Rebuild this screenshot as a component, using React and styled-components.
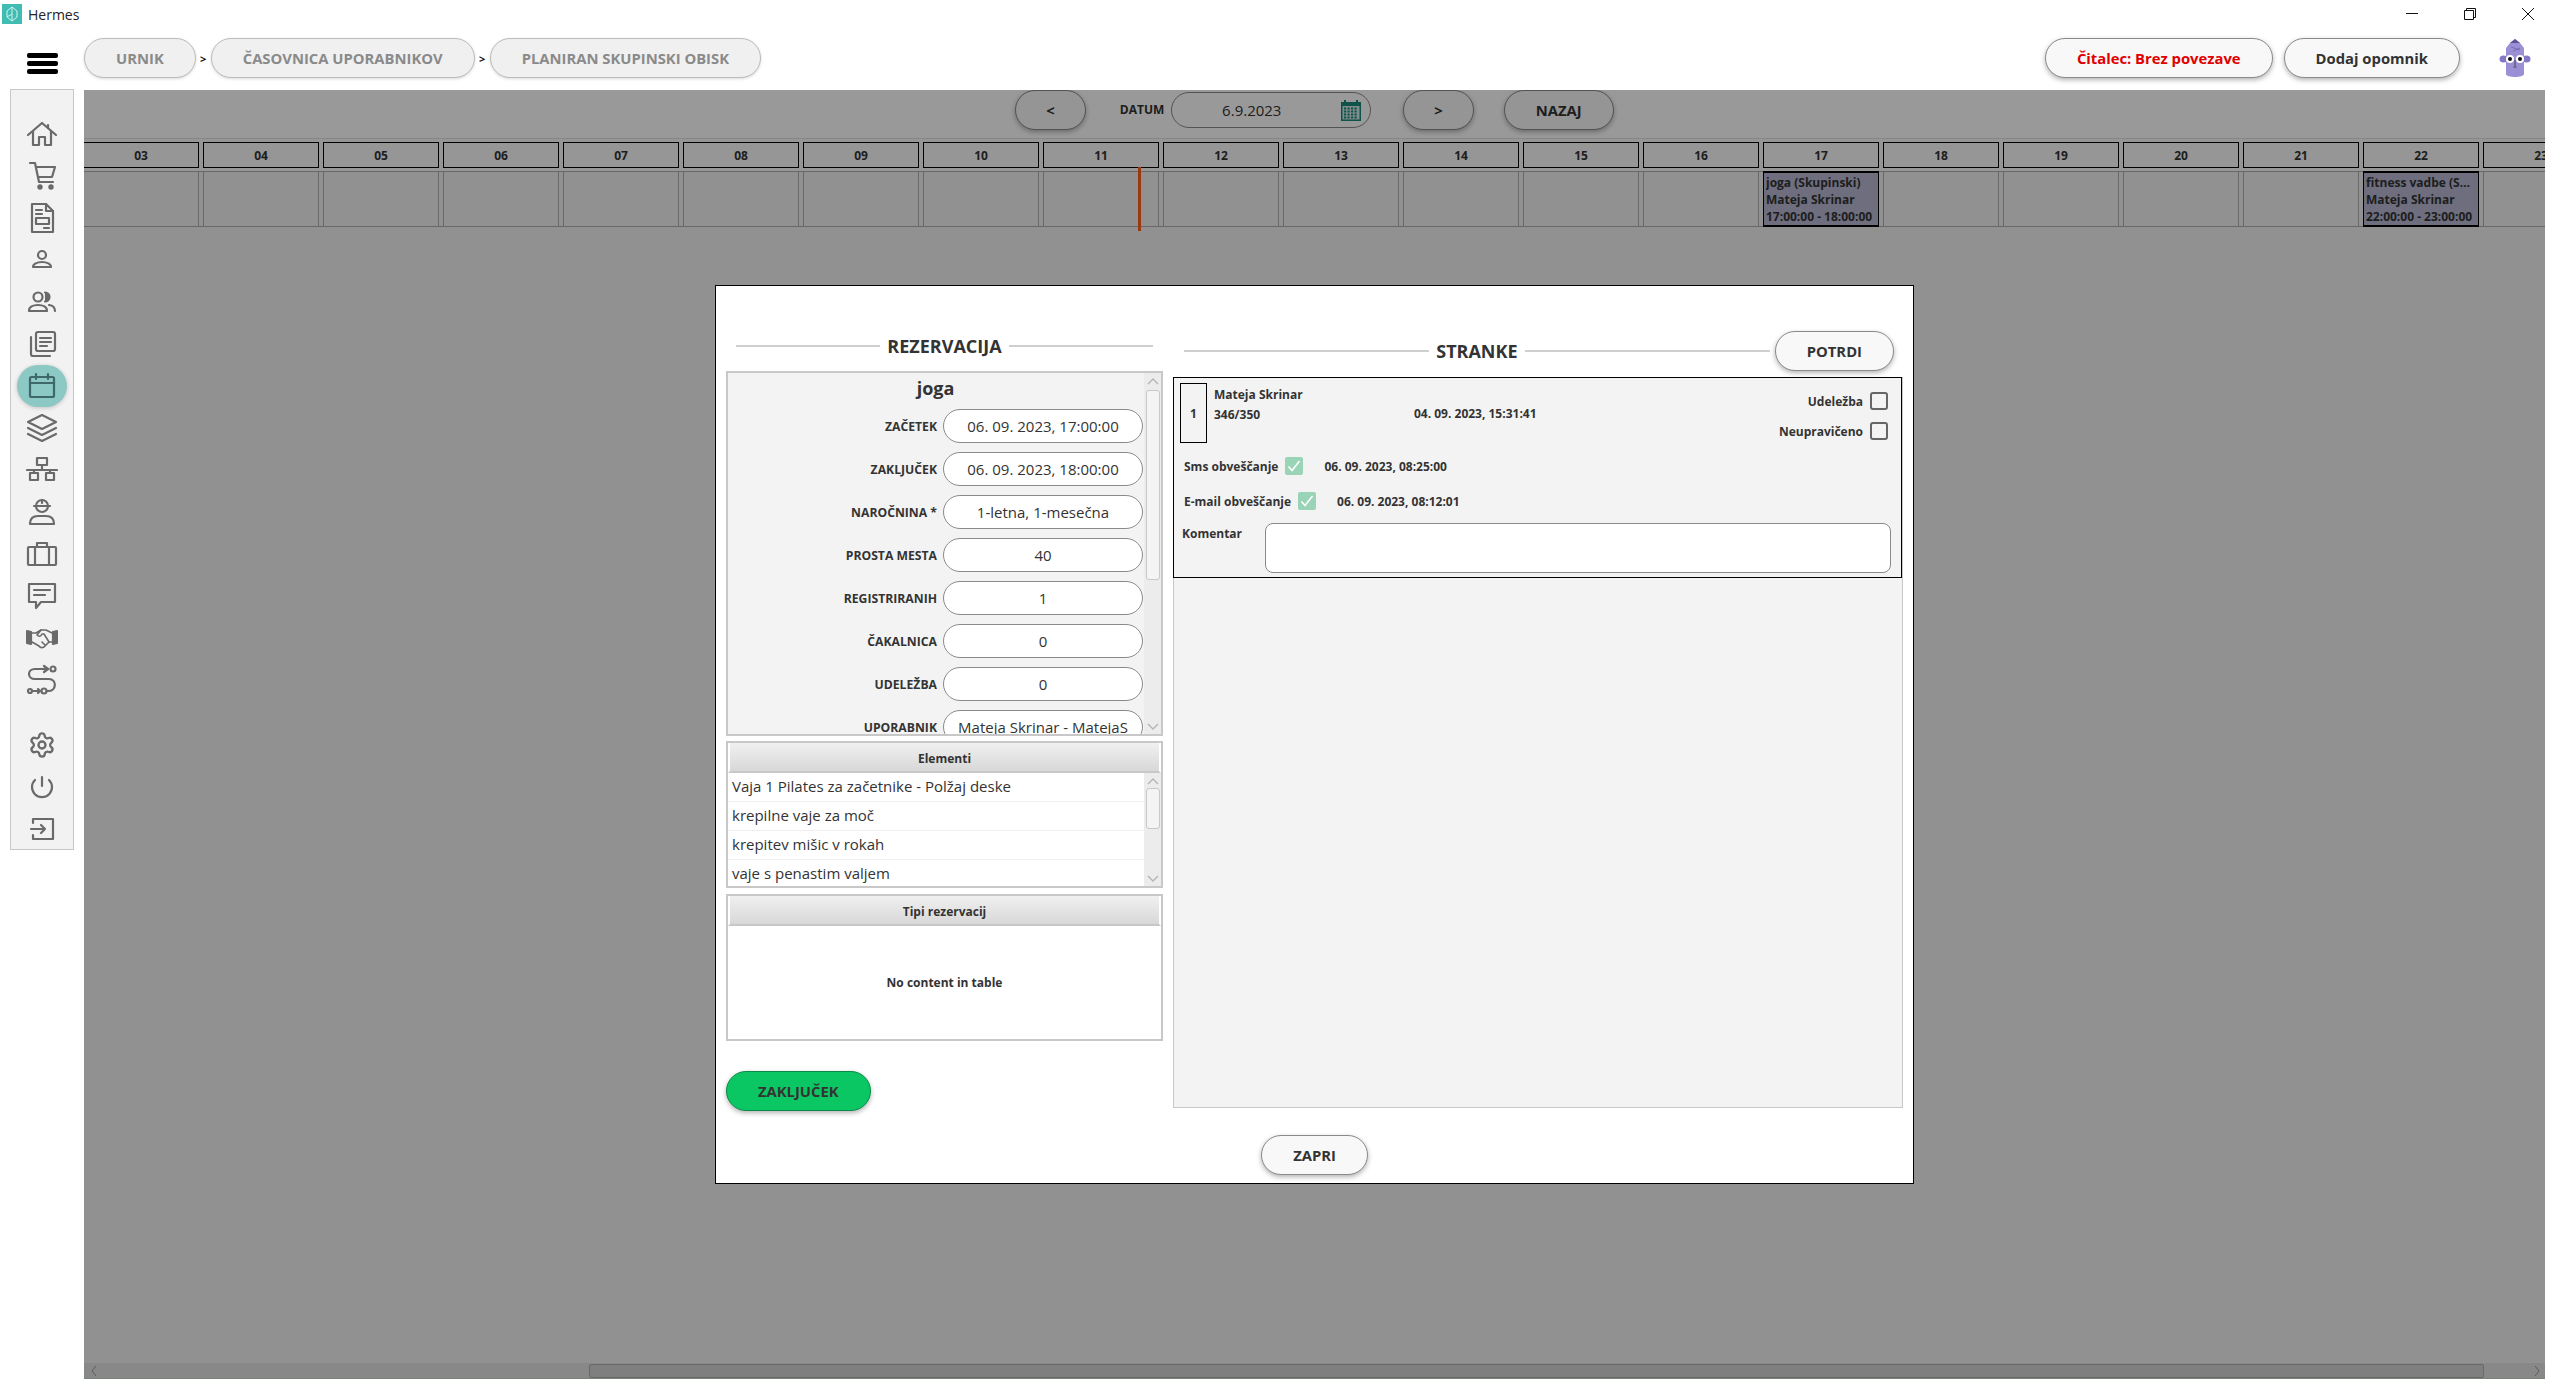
import React from "react";
import styled, { createGlobalStyle } from "styled-components";
import { Settings } from "lucide-react";

const days = ["03", "04", "05", "06", "07", "08", "09", "10", "11", "12", "13", "14", "15", "16", "17", "18", "19", "20", "21", "22", "23"];

const events = {
  17: ["joga (Skupinski)", "Mateja Skrinar", "17:00:00 - 18:00:00"],
  22: ["fitness vadbe (Skupinski)", "Mateja Skrinar", "22:00:00 - 23:00:00"],
};

const fields = [
  ["ZAČETEK", "06. 09. 2023, 17:00:00"],
  ["ZAKLJUČEK", "06. 09. 2023, 18:00:00"],
  ["NAROČNINA *", "1-letna, 1-mesečna"],
  ["PROSTA MESTA", "40"],
  ["REGISTRIRANIH", "1"],
  ["ČAKALNICA", "0"],
  ["UDELEŽBA", "0"],
  ["UPORABNIK", "Mateja Skrinar - MatejaS"],
];

const elements = [
  "Vaja 1 Pilates za začetnike - Polžaj deske",
  "krepilne vaje za moč",
  "krepitev mišic v rokah",
  "vaje s penastim valjem",
];

const Svg = ({ children }) => (
  <svg width="32" height="32" viewBox="0 0 32 32" fill="none" stroke="currentColor" strokeWidth="2.2" strokeLinecap="round" strokeLinejoin="round">
    {children}
  </svg>
);

const navTop = [
  <Svg>
    <path d="M2 17 16 5l14 12" />
    <path d="M7 13v14h6v-8h6v8h6V13" />
    <path d="M22 7v3" />
  </Svg>,
  <Svg>
    <path d="M4 3h5l4 19h14" />
    <path d="M10 7h19l-3 10H12" />
    <circle cx="14" cy="27" r="1.6" fill="currentColor" />
    <circle cx="25" cy="27" r="1.6" fill="currentColor" />
  </Svg>,
  <Svg>
    <path d="M6 2h14l7 7v21H6z" />
    <path d="M20 2v7h7" />
    <path d="M10 8h6M10 12h6M18 26h5" />
    <rect x="10" y="16" width="13" height="6" />
  </Svg>,
  <Svg>
    <circle cx="16" cy="11" r="4" />
    <path d="M7 23c0-3 4-5 9-5s9 2 9 5z" />
  </Svg>,
  <Svg>
    <circle cx="12" cy="11" r="4.5" />
    <path d="M3 25c0-4 4-6 9-6s9 2 9 6z" />
    <path d="M19 6.5a4.5 4.5 0 0 1 0 9" fill="currentColor" />
    <path d="M23 19c4 .6 6 3 6 6" />
  </Svg>,
  <Svg>
    <rect x="10" y="4" width="19" height="19" rx="2" />
    <path d="M14 10h11M14 14h11M14 18h7" />
    <path d="M5 9v17c0 1.500.8 2 2 2h17" />
  </Svg>,
];

const navMiddle = [
  <Svg>
    <path d="M16 3 30 10l-14 7L2 10z" />
    <path d="m2 16 14 7 14-7" />
    <path d="m2 22 14 7 14-7" />
  </Svg>,
  <Svg>
    <rect x="11" y="4" width="10" height="7" />
    <path d="M16 11v5M1 16h30M8 16v3M24 16v3" />
    <rect x="4" y="19" width="8" height="7" />
    <rect x="20" y="19" width="8" height="7" />
  </Svg>,
  <Svg>
    <circle cx="16" cy="10" r="6" />
    <path d="M8 10h16M16 4v3" />
    <path d="M4 28c0-5 3-8 8-8h8c5 0 8 3 8 8z" />
  </Svg>,
  <Svg>
    <rect x="2" y="9" width="28" height="18" rx="1" />
    <path d="M11 9V5h10v4M9 9v18M23 9v18" />
  </Svg>,
  <Svg>
    <path d="M3 4h26v18H15l-5 6v-6H3z" />
    <path d="M8 10h16M8 15h11" />
  </Svg>,
  <Svg>
    <path d="M1 9l4 1v12l-4-1z" fill="currentColor" />
    <path d="M31 9l-4 1v12l4-1z" fill="currentColor" />
    <g strokeWidth="1.6">
      <path d="M6 11h4l5-3h5l6 3" />
      <path d="M26 20h-3l-5 5c-2 1-4 .5-5-1l-7-4" />
      <path d="M15 8l-4 5c2 2 4 1.500 5-1h2l5 8" />
      <path d="M16 20l3 3" />
    </g>
  </Svg>,
  <Svg>
    <circle cx="27" cy="5" r="2.5" />
    <path d="M22 5H9c-8 0-8 10 0 10h14c8 0 8 12-1 12h-1" />
    <path d="m18 2 4 3-4 3" />
    <circle cx="4" cy="27" r="2" />
    <circle cx="18" cy="27" r="2.500" />
    <path d="M7 27h7m-2-2 2 2-2 2" />
  </Svg>,
];

const navBottom = [
  <Settings size={28} strokeWidth={2} />,
  <Svg>
    <path d="M16 6v9" />
    <path d="M9 9a10 10 0 1 0 14 0" />
  </Svg>,
  <Svg>
    <path d="M7 10V6h20v20H7v-4" />
    <path d="M5 16h14M15 12l4 4-4 4" />
  </Svg>,
];

const Chevron = ({ up }) => (
  <svg width="12" height="8" viewBox="0 0 12 8" fill="none" stroke="#b4b4b4" strokeWidth="1.400">
    <path d={up ? "M1 7l5-5 5 5" : "M1 1l5 5 5-5"} />
  </svg>
);

const Scroller = ({ thumbTop, thumbHeight }) => (
  <ScrollTrack>
    <ScrollArrow>
      <Chevron up />
    </ScrollArrow>
    <ScrollThumb $top={thumbTop} $height={thumbHeight} />
    <ScrollArrow $bottom>
      <Chevron />
    </ScrollArrow>
  </ScrollTrack>
);

const Tick = () => (
  <svg width="14" height="12" viewBox="0 0 14 12" fill="none" stroke="#fff" strokeWidth="1.600">
    <path d="M1.500 6.500 5 10.500 12.500 1" />
  </svg>
);

const Avatar = () => (
  <svg width="32" height="38" viewBox="0 0 32 38">
    <ellipse cx="4.500" cy="20" rx="4" ry="3.500" fill="#8578c4" />
    <ellipse cx="27.500" cy="20" rx="4" ry="3.500" fill="#8578c4" />
    <path d="M16 0l5 4 4 5v26c0 4-18 4-18 0V9l4-5z" fill="#9b8fd6" />
    <path d="M11 4h10l-5-4z" fill="#5e5396" />
    <path d="M12 8l9 3M14 12l7-3" stroke="#6e63a8" strokeWidth="0.800" fill="none" />
    <circle cx="11" cy="20" r="4" fill="#fff" />
    <circle cx="21" cy="20" r="4" fill="#fff" />
    <circle cx="11" cy="20" r="2" fill="#111" />
    <circle cx="21" cy="20" r="2" fill="#111" />
    <path d="M16 21v6M14.500 28h3" stroke="#333" strokeWidth="0.800" />
  </svg>
);

export default function App() {
  return (
    <Page>
      <GlobalStyle />

      <TitleBar>
        <Logo>
          <svg width="12" height="16" viewBox="0 0 12 16" fill="none" stroke="#d6f3ef" strokeWidth="1">
            <path d="M1 5l5-4 5 4v6l-5 4-5-4zM6 1v14M1 11l5-3" />
          </svg>
        </Logo>
        <AppName>Hermes</AppName>
        <WindowControls>
          <svg width="12" height="12" viewBox="0 0 12 12" stroke="#111" fill="none">
            <path d="M0 5.500h12" />
          </svg>
          <svg width="12" height="12" viewBox="0 0 12 12" stroke="#111" fill="none">
            <path d="M.5 2.500h9v9h-9zM2.500 2.500v-2h9v9h-2" />
          </svg>
          <svg width="12" height="12" viewBox="0 0 12 12" stroke="#111" fill="none">
            <path d="M0 0l12 12M12 0 0 12" />
          </svg>
        </WindowControls>
      </TitleBar>

      <TopBar>
        <Hamburger>
          <span />
          <span />
          <span />
        </Hamburger>
        <Crumbs>
          <Crumb>URNIK</Crumb>
          <CrumbSep>&gt;</CrumbSep>
          <Crumb>ČASOVNICA UPORABNIKOV</Crumb>
          <CrumbSep>&gt;</CrumbSep>
          <Crumb>PLANIRAN SKUPINSKI OBISK</Crumb>
        </Crumbs>
        <TopActions>
          <Pill $red>Čitalec: Brez povezave</Pill>
          <Pill>Dodaj opomnik</Pill>
          <AvatarBox>
            <Avatar />
          </AvatarBox>
        </TopActions>
      </TopBar>

      <Body>
        <Sidebar>
          {navTop.map((icon, i) => (
            <NavItem key={i}>{icon}</NavItem>
          ))}
          <NavItem $active>
            <Svg>
              <rect x="4" y="7" width="24" height="20" rx="1.500" />
              <path d="M4 13h24M10 4v5M22 4v5" />
            </Svg>
          </NavItem>
          {navMiddle.map((icon, i) => (
            <NavItem key={i}>{icon}</NavItem>
          ))}
          <NavSpacer />
          {navBottom.map((icon, i) => (
            <NavItem key={i}>{icon}</NavItem>
          ))}
        </Sidebar>

        <Content>
          <DateBar>
            <Pill $arrow>&lt;</Pill>
            <DateLabel>DATUM</DateLabel>
            <DateField>
              <DateValue>6.9.2023</DateValue>
              <svg width="20" height="21" viewBox="0 0 20 21">
                <path d="M0 2h3V0h2v2h10V0h2v2h3v19H0z" fill="#19897b" />
                <rect x="1.500" y="6" width="17" height="13.500" fill="#d6ece8" />
                {[8, 11, 14, 17].map((y) =>
                  [3, 6.5, 10, 13.5].map((x) => <rect key={x + "-" + y} x={x} y={y - 0.5} width="2.200" height="2" fill="#19897b" />)
                )}
              </svg>
            </DateField>
            <Pill $arrow $next>&gt;</Pill>
            <Pill $back>NAZAJ</Pill>
          </DateBar>

          <Timeline>
            <TimelineHead>
              {days.map((d) => (
                <DayCell key={d}>{d}</DayCell>
              ))}
            </TimelineHead>
            <TimelineRow>
              {days.map((d) => {
                const ev = events[Number(d)];
                return (
                  <SlotCell key={d} $event={!!ev}>
                    {ev && ev.map((line) => <EventLine key={line}>{line}</EventLine>)}
                  </SlotCell>
                );
              })}
            </TimelineRow>
            <NowLine />
          </Timeline>

          <HorizontalBar>
            <svg width="6" height="12" viewBox="0 0 6 12" fill="none" stroke="#9a9a9a">
              <path d="M5 1 1 6l4 5" />
            </svg>
            <HorizontalThumb />
            <svg width="6" height="12" viewBox="0 0 6 12" fill="none" stroke="#9a9a9a">
              <path d="M1 1l4 5-4 5" />
            </svg>
          </HorizontalBar>

          <Overlay>
            <Modal>
              <Columns>
                <LeftColumn>
                  <SectionTitle>
                    <TitleLine />
                    <TitleText>REZERVACIJA</TitleText>
                    <TitleLine />
                  </SectionTitle>

                  <FormPanel>
                    <FormBody>
                      <FormHeading>joga</FormHeading>
                      {fields.map(([label, value]) => (
                        <FormRow key={label}>
                          <FormLabel>{label}</FormLabel>
                          <FormInput readOnly value={value} />
                        </FormRow>
                      ))}
                    </FormBody>
                    <Scroller thumbTop={2} thumbHeight={190} />
                  </FormPanel>

                  <TableBox>
                    <TableHead>Elementi</TableHead>
                    <ListWrap>
                      <List>
                        {elements.map((el) => (
                          <ListRow key={el}>{el}</ListRow>
                        ))}
                      </List>
                      <Scroller thumbTop={0} thumbHeight={41} />
                    </ListWrap>
                  </TableBox>

                  <TableBox $gap>
                    <TableHead>Tipi rezervacij</TableHead>
                    <EmptyTable>No content in table</EmptyTable>
                  </TableBox>

                  <FinishRow>
                    <Pill $green>ZAKLJUČEK</Pill>
                  </FinishRow>
                </LeftColumn>

                <RightColumn>
                  <ClientsHeader>
                    <SectionTitle $wide>
                      <TitleLine />
                      <TitleText>STRANKE</TitleText>
                      <TitleLine />
                    </SectionTitle>
                    <Pill>POTRDI</Pill>
                  </ClientsHeader>

                  <ClientsPanel>
                    <ClientCard>
                      <CardTop>
                        <IndexBox>1</IndexBox>
                        <ClientInfo>
                          <span>Mateja Skrinar</span>
                          <span>346/350</span>
                        </ClientInfo>
                        <BookedAt>04. 09. 2023, 15:31:41</BookedAt>
                        <Attendance>
                          <AttendanceRow>
                            Udeležba
                            <CheckBox />
                          </AttendanceRow>
                          <AttendanceRow>
                            Neupravičeno
                            <CheckBox />
                          </AttendanceRow>
                        </Attendance>
                      </CardTop>
                      <NotifyRow $first>
                        Sms obveščanje
                        <GreenCheck>
                          <Tick />
                        </GreenCheck>
                        <NotifyDate>06. 09. 2023, 08:25:00</NotifyDate>
                      </NotifyRow>
                      <NotifyRow>
                        E-mail obveščanje
                        <GreenCheck>
                          <Tick />
                        </GreenCheck>
                        <NotifyDate>06. 09. 2023, 08:12:01</NotifyDate>
                      </NotifyRow>
                      <CommentRow>
                        <CommentLabel>Komentar</CommentLabel>
                        <CommentBox readOnly />
                      </CommentRow>
                    </ClientCard>
                  </ClientsPanel>
                </RightColumn>
              </Columns>

              <ModalFooter>
                <Pill>ZAPRI</Pill>
              </ModalFooter>
            </Modal>
          </Overlay>
        </Content>
      </Body>
    </Page>
  );
}

const GlobalStyle = createGlobalStyle`
  html, body {
    margin: 0;
    background: #fff;
    overflow: hidden;
  }
  * {
    box-sizing: border-box;
  }
`;

const Page = styled.div`
  width: 2558px;
  height: 1399px;
  font-family: "Open Sans", "Noto Sans", sans-serif;
  color: #333;
  display: flex;
  flex-direction: column;
`;

const TitleBar = styled.div`
  height: 30px;
  display: flex;
  align-items: flex-start;
  padding: 4px 24px 0 2px;
`;

const Logo = styled.div`
  width: 20px;
  height: 20px;
  background: #3fbdb2;
  display: flex;
  align-items: center;
  justify-content: center;
`;

const AppName = styled.div`
  margin-left: 6px;
  font-size: 14px;
  line-height: 22px;
  color: #222;
`;

const WindowControls = styled.div`
  margin-left: auto;
  margin-top: 4px;
  display: flex;
  gap: 46px;
`;

const TopBar = styled.div`
  height: 60px;
  display: flex;
  align-items: flex-start;
  padding: 8px 27px 0;
`;

const Hamburger = styled.div`
  width: 31px;
  margin-top: 15px;
  margin-right: 26px;
  display: flex;
  flex-direction: column;
  gap: 3px;

  span {
    height: 5px;
    border-radius: 2px;
    background: #000;
  }
`;

const Crumbs = styled.div`
  display: flex;
  align-items: center;
`;

const Crumb = styled.div`
  height: 40px;
  padding: 0 31px;
  display: flex;
  align-items: center;
  border: 1.5px solid #bcbcbc;
  border-radius: 20px;
  background: #f0f0f0;
  color: #8a8a8a;
  font-size: 14.8px;
  font-weight: 700;
  box-shadow: 0 1px 3px rgba(0, 0, 0, 0.15);
`;

const CrumbSep = styled.span`
  width: 15px;
  text-align: center;
  font-size: 11px;
  font-weight: 700;
  color: #111;
`;

const TopActions = styled.div`
  margin-left: auto;
  display: flex;
  gap: 11px;
`;

const AvatarBox = styled.div`
  width: 32px;
  height: 38px;
  margin-left: 28px;
  margin-top: 1px;
`;

const Pill = styled.button`
  height: 40px;
  padding: 0 ${(p) => (p.$arrow ? "30px" : "31px")};
  border-radius: 20px;
  border: 1.5px solid ${(p) => (p.$green ? "#0a8a49" : "#8a8a8a")};
  background: ${(p) => (p.$green ? "#0bc763" : "#f8f8f8")};
  color: ${(p) => (p.$red ? "#e00000" : "#333")};
  font-family: inherit;
  font-size: 14.8px;
  font-weight: 700;
  white-space: nowrap;
  box-shadow: 0 2px 5px rgba(0, 0, 0, 0.3);
  margin-left: ${(p) => (p.$next ? "32px" : p.$back ? "30px" : "0")};
`;

const Body = styled.div`
  height: 1289px;
  display: flex;
  align-items: flex-start;
`;

const Sidebar = styled.nav`
  width: 64px;
  height: 761px;
  margin: -1px 10px 0;
  padding-top: 23px;
  background: #f2f2f2;
  border: 1.5px solid #c8c8c8;
  display: flex;
  flex-direction: column;
  align-items: center;
`;

const NavItem = styled.div`
  width: 50px;
  height: 42px;
  flex: none;
  display: flex;
  align-items: center;
  justify-content: center;
  color: ${(p) => (p.$active ? "#3f686a" : "#6a6a6a")};
  background: ${(p) => (p.$active ? "#8cc8c4" : "transparent")};
  border-radius: 21px;
  box-shadow: ${(p) => (p.$active ? "0 1px 4px rgba(0,0,0,.2)" : "none")};
`;

const NavSpacer = styled.div`
  height: 23px;
  flex: none;
`;

const Content = styled.main`
  position: relative;
  width: 2461px;
  height: 100%;
  background: #fff;
  display: flex;
  flex-direction: column;
  overflow: hidden;
`;

const DateBar = styled.div`
  height: 48px;
  flex: none;
  display: flex;
  justify-content: center;
  align-items: flex-start;
`;

const DateLabel = styled.span`
  margin-left: 34px;
  margin-right: 7px;
  line-height: 40px;
  font-size: 12px;
  font-weight: 700;
`;

const DateField = styled.div`
  width: 200px;
  height: 36px;
  margin-top: 2px;
  padding-right: 9px;
  border: 1.5px solid #8a8a8a;
  border-radius: 18px;
  background: #fff;
  display: flex;
  align-items: center;
`;

const DateValue = styled.span`
  flex: 1;
  margin-right: 10px;
  text-align: center;
  font-size: 15px;
`;

const Timeline = styled.section`
  position: relative;
  flex: 1;
  background: #f2f2f2;
`;

const TimelineHead = styled.div`
  height: 33px;
  padding: 3px 0 0;
  margin-left: -1px;
  border-top: 1px solid #dbe6db;
  background: #fbfbfb;
  display: flex;
  gap: 4px;
`;

const DayCell = styled.div`
  width: 116px;
  height: 26px;
  flex: none;
  border: 1.5px solid #000;
  display: flex;
  align-items: center;
  justify-content: center;
  font-size: 12px;
  font-weight: 700;
`;

const TimelineRow = styled.div`
  height: 56px;
  margin-left: -1px;
  border-top: 1.5px solid #b0b0b0;
  border-bottom: 1.5px solid #b0b0b0;
  display: flex;
  gap: 4px;
`;

const SlotCell = styled.div`
  width: 116px;
  height: ${(p) => (p.$event ? "56px" : "auto")};
  flex: none;
  margin-top: ${(p) => (p.$event ? "-1.5px" : "0")};
  padding: 1px 1px 1px 2px;
  border-left: 1.5px solid ${(p) => (p.$event ? "#000" : "#b0b0b0")};
  border-right: 1.5px solid ${(p) => (p.$event ? "#000" : "#b0b0b0")};
  border-top: ${(p) => (p.$event ? "2px solid #000" : "none")};
  border-bottom: ${(p) => (p.$event ? "2px solid #000" : "none")};
  background: ${(p) => (p.$event ? "#b7b7d2" : "transparent")};
`;

const EventLine = styled.div`
  font-size: 12px;
  font-weight: 700;
  line-height: 17px;
  white-space: nowrap;
  overflow: hidden;
  text-overflow: ellipsis;
`;

const NowLine = styled.div`
  position: absolute;
  left: 1054px;
  top: 29px;
  width: 3px;
  height: 64px;
  background: #ff5f1c;
`;

const HorizontalBar = styled.div`
  height: 16px;
  flex: none;
  background: #e3e3e3;
  border-bottom: 1px solid #c8dcc8;
  display: flex;
  align-items: center;
  padding: 0 5px 0 7px;
`;

const HorizontalThumb = styled.div`
  width: 1895px;
  height: 14px;
  flex: none;
  margin-left: 492px;
  margin-right: 50px;
  background: #d4d4d4;
  border: 1px solid #b0b0b0;
  border-radius: 2px;
`;

const Overlay = styled.div`
  position: absolute;
  inset: 0;
  background: rgba(0, 0, 0, 0.4);
  display: flex;
  align-items: center;
  justify-content: center;
`;

const Modal = styled.div`
  width: 1199px;
  height: 899px;
  padding: 0 10px;
  background: #fff;
  border: 1px solid #000;
  display: flex;
  flex-direction: column;
`;

const Columns = styled.div`
  display: flex;
  gap: 10px;
`;

const LeftColumn = styled.div`
  width: 437px;
  padding-top: 47px;
  display: flex;
  flex-direction: column;
`;

const RightColumn = styled.div`
  flex: 1;
  padding-top: 45px;
  display: flex;
  flex-direction: column;
`;

const SectionTitle = styled.div`
  height: 26px;
  flex: ${(p) => (p.$wide ? "1" : "none")};
  display: flex;
  align-items: center;
  gap: 7px;
  padding: ${(p) => (p.$wide ? "0 5px 0 11px" : "0 10px")};
  margin-bottom: ${(p) => (p.$wide ? "0" : "12px")};
`;

const TitleLine = styled.div`
  flex: 1;
  height: 1.5px;
  background: #cfcfcf;
`;

const TitleText = styled.h2`
  margin: 0;
  font-size: 18px;
  font-weight: 700;
  letter-spacing: 0;
`;

const FormPanel = styled.div`
  height: 365px;
  background: #f3f3f3;
  border: 2px solid #c8c8c8;
  display: flex;
  overflow: hidden;
`;

const FormBody = styled.div`
  flex: 1;
  min-width: 0;
  padding-right: 1px;
`;

const FormHeading = styled.div`
  height: 36px;
  padding-bottom: 7px;
  display: flex;
  align-items: center;
  justify-content: center;
  font-size: 18px;
  font-weight: 700;
`;

const FormRow = styled.div`
  height: 34px;
  margin-bottom: 9px;
  display: flex;
  align-items: center;
  justify-content: flex-end;
  gap: 6px;
`;

const FormLabel = styled.span`
  font-size: 12.2px;
  font-weight: 700;
`;

const FormInput = styled.input`
  width: 200px;
  height: 34px;
  flex: none;
  border: 1.5px solid #8a8a8a;
  border-radius: 17px;
  background: #fff;
  color: #333;
  font-family: inherit;
  font-size: 15px;
  text-align: center;
  padding: 0 12px;
  outline: none;
`;

const ScrollTrack = styled.div`
  width: 17px;
  flex: none;
  background: #ececec;
  display: flex;
  flex-direction: column;
  align-items: center;
`;

const ScrollArrow = styled.div`
  height: 15px;
  flex: none;
  margin-top: ${(p) => (p.$bottom ? "auto" : "0")};
  display: flex;
  align-items: center;
`;

const ScrollThumb = styled.div`
  width: 14px;
  height: ${(p) => p.$height}px;
  margin-top: ${(p) => p.$top}px;
  background: #f4f4f4;
  border: 1px solid #c8c8c8;
  border-radius: 3px;
`;

const TableBox = styled.div`
  margin-top: ${(p) => (p.$gap ? "6px" : "5px")};
  border: 2px solid #c8c8c8;
  background: #fff;
  display: flex;
  flex-direction: column;
`;

const TableHead = styled.div`
  height: 30px;
  flex: none;
  padding-top: 2px;
  display: flex;
  align-items: center;
  justify-content: center;
  background: linear-gradient(#f0f0f0, #d8d8d8);
  border-left: 2px solid #fff;
  border-right: 2px solid #fff;
  border-bottom: 2px solid #c8c8c8;
  font-size: 12px;
  font-weight: 700;
`;

const ListWrap = styled.div`
  height: 113px;
  display: flex;
  overflow: hidden;
`;

const List = styled.div`
  flex: 1;
`;

const ListRow = styled.div`
  height: 29px;
  padding-left: 4px;
  border-bottom: 1px solid #efefef;
  font-size: 15px;
  line-height: 27px;
  white-space: nowrap;
`;

const EmptyTable = styled.div`
  height: 113px;
  display: flex;
  align-items: center;
  justify-content: center;
  font-size: 12px;
  font-weight: 700;
`;

const FinishRow = styled.div`
  margin-top: 30px;
  display: flex;
`;

const ClientsHeader = styled.div`
  height: 40px;
  flex: none;
  padding-right: 9px;
  display: flex;
  align-items: center;
`;

const ClientsPanel = styled.div`
  height: 731px;
  margin-top: 6px;
  background: #f3f3f3;
  border: 1.5px solid #c8c8c8;
  border-top: none;
`;

const ClientCard = styled.div`
  height: 201px;
  padding: 5px 10px 4px 6px;
  margin-left: -1px;
  border: 1px solid #000;
  display: flex;
  flex-direction: column;
`;

const CardTop = styled.div`
  height: 60px;
  flex: none;
  padding-right: 3px;
  display: flex;
  font-size: 12px;
  font-weight: 700;
`;

const IndexBox = styled.div`
  width: 27px;
  height: 60px;
  flex: none;
  border: 1.5px solid #000;
  display: flex;
  align-items: center;
  justify-content: center;
  font-weight: 700;
`;

const ClientInfo = styled.div`
  width: 200px;
  margin-left: 7px;
  padding-top: 3px;
  display: flex;
  flex-direction: column;
  gap: 3px;
  line-height: 17px;
`;

const BookedAt = styled.div`
  line-height: 17px;
  padding-top: 22px;
`;

const Attendance = styled.div`
  margin-left: auto;
  padding-top: 9px;
  display: flex;
  flex-direction: column;
  gap: 12px;
`;

const AttendanceRow = styled.label`
  height: 18px;
  display: flex;
  align-items: center;
  justify-content: flex-end;
  gap: 7px;
`;

const CheckBox = styled.span`
  width: 18px;
  height: 18px;
  border: 2px solid #666;
  border-radius: 3px;
`;

const NotifyRow = styled.div`
  height: 18px;
  flex: none;
  margin-top: ${(p) => (p.$first ? "14px" : "17px")};
  padding-left: 4px;
  display: flex;
  align-items: center;
  font-size: 12px;
  font-weight: 700;
`;

const GreenCheck = styled.span`
  width: 18px;
  height: 18px;
  margin-left: 7px;
  border-radius: 2px;
  background: #9ad4b6;
  display: flex;
  align-items: center;
  justify-content: center;
`;

const NotifyDate = styled.span`
  margin-left: 21px;
`;

const CommentRow = styled.div`
  height: 50px;
  flex: none;
  margin-top: 13px;
  padding-left: 2px;
  display: flex;
`;

const CommentLabel = styled.span`
  width: 83px;
  flex: none;
  padding-top: 2px;
  font-size: 12px;
  font-weight: 700;
`;

const CommentBox = styled.textarea`
  flex: 1;
  height: 50px;
  resize: none;
  border: 1px solid #8a8a8a;
  border-radius: 8px;
  background: #fff;
  outline: none;
`;

const ModalFooter = styled.div`
  margin-top: 24px;
  display: flex;
  justify-content: center;
`;
